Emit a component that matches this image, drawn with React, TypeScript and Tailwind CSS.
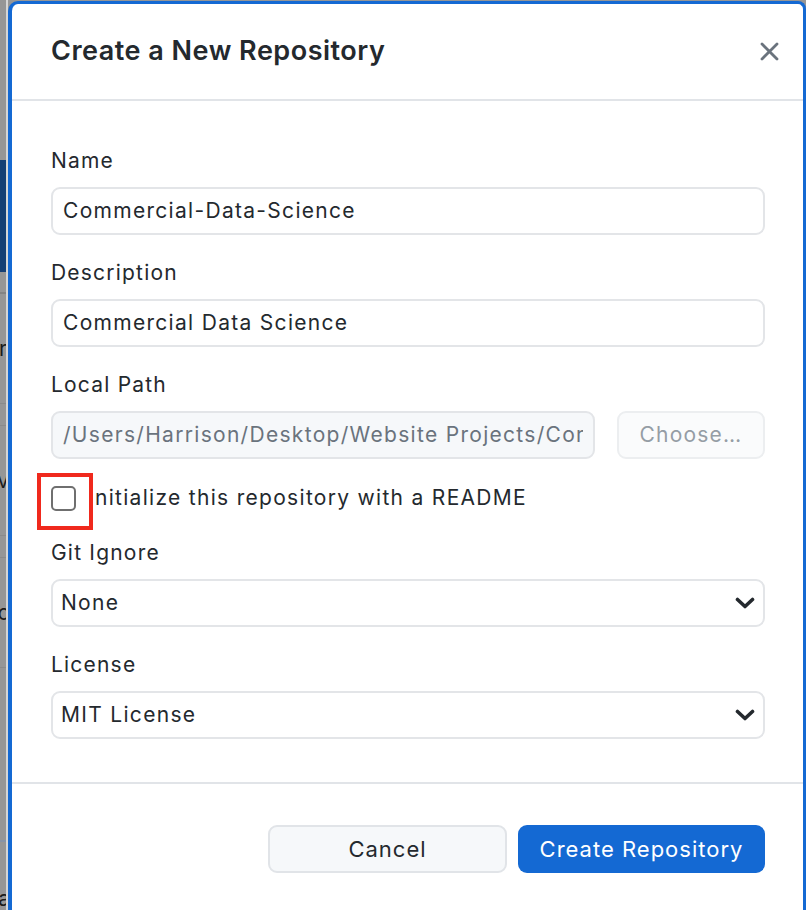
import React from 'react';

function Chevron() {
  return (
    <svg width="20" height="12" viewBox="0 0 20 12" className="shrink-0">
      <polyline
        points="2.5,2.5 10,9.5 17.5,2.5"
        fill="none"
        stroke="#24292e"
        strokeWidth="3.6"
        strokeLinecap="round"
        strokeLinejoin="round"
      />
    </svg>
  );
}

function Field({ label, value }: { label: string; value: string }) {
  return (
    <div className="flex flex-col">
      <label className="h-[26px] text-[21px] leading-[26px] tracking-[1.2px] text-[#24292e]">{label}</label>
      <div className="mt-[13px] flex h-[48px] items-center rounded-[9px] border-2 border-[#e3e5e8] bg-white px-[10px] text-[21px] tracking-[1.3px] text-[#24292e]">
        {value}
      </div>
    </div>
  );
}

function SelectField({ label, value }: { label: string; value: string }) {
  return (
    <div className="flex flex-col">
      <label className="h-[26px] text-[21px] leading-[26px] tracking-[1.2px] text-[#24292e]">{label}</label>
      <div className="mt-[13px] flex h-[48px] items-center justify-between rounded-[9px] border-2 border-[#e3e5e8] bg-white pl-[8px] pr-[8px] text-[21px] tracking-[1.3px] text-[#24292e]">
        <span>{value}</span>
        <Chevron />
      </div>
    </div>
  );
}

export default function App() {
  return (
    <div className="relative flex h-[910px] w-[806px] overflow-hidden bg-[#969696] font-['Inter',sans-serif]">
      {/* Dimmed app behind the dialog */}
      <div className="flex w-[6px] shrink-0 flex-col overflow-hidden text-[21px] leading-[26px] text-[#1b1b1b]">
        <div className="h-[160px] shrink-0" />
        <div className="h-[112px] shrink-0 bg-[#153f74]" />
        <div className="h-[20px] shrink-0" />
        <div className="h-[2px] shrink-0 bg-[#838383]" />
        <div className="flex h-[109px] shrink-0 items-center justify-end">
          <span className="-mr-[1px] shrink-0">r</span>
        </div>
        <div className="h-[1px] shrink-0 bg-[#8a8a8a]" />
        <div className="h-[21px] shrink-0" />
        <div className="h-[1px] shrink-0 bg-[#8a8a8a]" />
        <div className="flex h-[109px] shrink-0 items-center justify-end">
          <span className="-mr-[3px] shrink-0">v</span>
        </div>
        <div className="h-[1px] shrink-0 bg-[#8a8a8a]" />
        <div className="h-[21px] shrink-0" />
        <div className="h-[1px] shrink-0 bg-[#8a8a8a]" />
        <div className="flex h-[109px] shrink-0 items-center justify-end">
          <span className="-mr-[4px] shrink-0">o</span>
        </div>
        <div className="h-[1px] shrink-0 bg-[#8a8a8a]" />
        <div className="h-[172px] shrink-0" />
        <div className="h-[2px] shrink-0 bg-[#8793a6]" />
        <div className="flex h-[70px] shrink-0 items-end justify-end">
          <span className="-mr-[4px] shrink-0">a</span>
        </div>
      </div>
      <div className="w-[2px] shrink-0 bg-[#d6d6d6]" />

      {/* Dialog */}
      <div className="mt-[1px] flex min-w-0 flex-1 flex-col rounded-tl-[10px] rounded-tr-[8px] border-l-4 border-r-[3px] border-t-[3px] border-[#1469d3] bg-white">
        <header className="flex h-[97px] shrink-0 items-center justify-between border-b-2 border-[#e1e4e8] pl-[39px] pr-[24px]">
          <h1 className="text-[27px] font-semibold tracking-[0.5px] text-[#24292e]">Create a New Repository</h1>
          <button aria-label="Close" className="flex h-[20px] w-[20px] items-center justify-center">
            <svg width="19" height="19" viewBox="0 0 19 19">
              <path d="M2 2 L17 17 M17 2 L2 17" stroke="#6a737d" strokeWidth="2.8" strokeLinecap="round" />
            </svg>
          </button>
        </header>

        <div className="flex flex-col border-b-2 border-[#e1e4e8] pb-[43px] pl-[39px] pr-[38px] pt-[47px]">
          <Field label="Name" value="Commercial-Data-Science" />
          <div className="mt-[25px]">
            <Field label="Description" value="Commercial Data Science" />
          </div>

          <div className="mt-[25px] flex flex-col">
            <label className="h-[26px] text-[21px] leading-[26px] tracking-[1.2px] text-[#24292e]">Local Path</label>
            <div className="mt-[13px] flex gap-[22px]">
              <div className="flex h-[48px] min-w-0 flex-1 items-center overflow-hidden rounded-[9px] border-2 border-[#e3e5e8] bg-[#f6f8fa] px-[10px] text-[21px] tracking-[1.3px] text-[#6a737d]">
                <span className="min-w-0 overflow-hidden whitespace-nowrap">/Users/Harrison/Desktop/Website Projects/Commercial-Data-Science</span>
              </div>
              <button className="h-[48px] w-[148px] shrink-0 rounded-[9px] border-2 border-[#eceef0] bg-[#fafbfc] text-[21px] tracking-[1.2px] text-[#959da5]">
                Choose…
              </button>
            </div>
          </div>

          <div className="mt-[26px] flex h-[26px] items-center gap-[12px]">
            <span className="h-[25px] w-[25px] shrink-0 rounded-[5px] border-2 border-[#6f6f6f] bg-white" />
            <span className="text-[21px] leading-[26px] tracking-[1.3px] text-[#24292e]">Initialize this repository with a README</span>
          </div>

          <div className="mt-[29px]">
            <SelectField label="Git Ignore" value="None" />
          </div>
          <div className="mt-[25px]">
            <SelectField label="License" value="MIT License" />
          </div>
        </div>

        <footer className="flex flex-1 items-start justify-end gap-[11px] pr-[38px] pt-[41px]">
          <button className="h-[48px] w-[239px] rounded-[9px] border-2 border-[#e1e4e8] bg-[#f6f8fa] text-[22px] tracking-[1px] text-[#24292e]">
            Cancel
          </button>
          <button className="h-[48px] w-[247px] rounded-[9px] bg-[#1469d3] text-[22px] tracking-[1px] text-white">
            Create Repository
          </button>
        </footer>
      </div>

      {/* Annotation box around the checkbox */}
      <div className="absolute left-[37px] top-[473px] h-[57px] w-[56px] border-4 border-[#f0291d]" />
    </div>
  );
}
